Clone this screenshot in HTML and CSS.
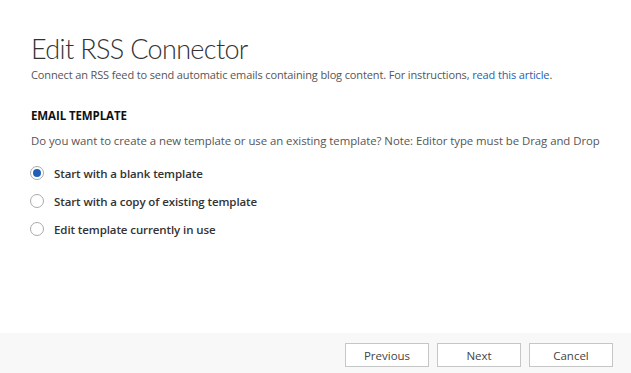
FILE: index.html
```html
<!DOCTYPE html>
<html lang="en">
<head>
    <meta charset="UTF-8">
    <title>Edit RSS Connector</title>
    <link rel="stylesheet" href="styles.css">
</head>
<body>
    <div class="dialog">
        <div class="content">
            <h1 class="title">Edit RSS Connector</h1>
            <p class="subtitle">Connect an RSS feed to send automatic emails containing blog content. For instructions, <a href="#" class="link">read this article</a>.</p>

            <h2 class="section-title">EMAIL TEMPLATE</h2>
            <p class="section-text">Do you want to create a new template or use an existing template? Note: Editor type must be Drag and Drop</p>

            <div class="options">
                <label class="option">
                    <input type="radio" name="template" checked>
                    <span class="radio"></span>
                    <span class="option-label">Start with a blank template</span>
                </label>
                <label class="option">
                    <input type="radio" name="template">
                    <span class="radio"></span>
                    <span class="option-label">Start with a copy of existing template</span>
                </label>
                <label class="option">
                    <input type="radio" name="template">
                    <span class="radio"></span>
                    <span class="option-label">Edit template currently in use</span>
                </label>
            </div>
        </div>

        <div class="footer">
            <button class="btn">Previous</button>
            <button class="btn">Next</button>
            <button class="btn">Cancel</button>
        </div>
    </div>
</body>
</html>
```

FILE: styles.css
```css
* {
    margin: 0;
    padding: 0;
    box-sizing: border-box;
}

body {
    background: #fff;
    font-family: "Open Sans", "Noto Sans", sans-serif;
    color: #444;
    height: 100vh;
    overflow: hidden;
}

.dialog {
    display: flex;
    flex-direction: column;
    height: 100vh;
}

.content {
    flex: 1;
    padding: 32px 18px 0 31px;
}

.title {
    font-family: Lato, Roboto, sans-serif;
    font-weight: 300;
    font-size: 27px;
    line-height: 34px;
    color: #333;
    letter-spacing: -0.65px;
}

.subtitle {
    font-size: 11px;
    letter-spacing: -0.13px;
    line-height: 16px;
    margin-top: 1px;
    color: #555;
}

.link {
    color: #1f62b0;
    text-decoration: none;
}

.section-title {
    font-size: 11.5px;
    font-weight: 700;
    color: #111;
    line-height: 16px;
    margin-top: 25px;
    letter-spacing: -0.1px;
}

.section-text {
    font-size: 11.4px;
    letter-spacing: -0.05px;
    line-height: 16px;
    margin-top: 9px;
    color: #555;
}

.options {
    display: flex;
    flex-direction: column;
    gap: 12px;
    margin-top: 16px;
}

.option {
    display: flex;
    align-items: center;
    gap: 10px;
    height: 16px;
    cursor: pointer;
}

.option input {
    display: none;
}

.radio {
    width: 14px;
    height: 14px;
    border: 1px solid #aaa;
    border-radius: 50%;
    display: flex;
    align-items: center;
    justify-content: center;
    margin-left: -1px;
}

.option input:checked + .radio::after {
    content: "";
    width: 8px;
    height: 8px;
    border-radius: 50%;
    background: #1f5fb8;
}

.option-label {
    font-size: 11.5px;
    font-weight: 600;
    color: #333;
    letter-spacing: -0.1px;
}

.footer {
    height: 40px;
    background: #f8f8f8;
    display: flex;
    justify-content: flex-end;
    align-items: flex-start;
    gap: 8px;
    padding: 10px 18px 0;
}

.btn {
    width: 84px;
    height: 24px;
    background: #fff;
    border: 1px solid #c6c6c6;
    font-family: "Open Sans", "Noto Sans", sans-serif;
    font-size: 11.5px;
    color: #444;
    cursor: pointer;
}
```
